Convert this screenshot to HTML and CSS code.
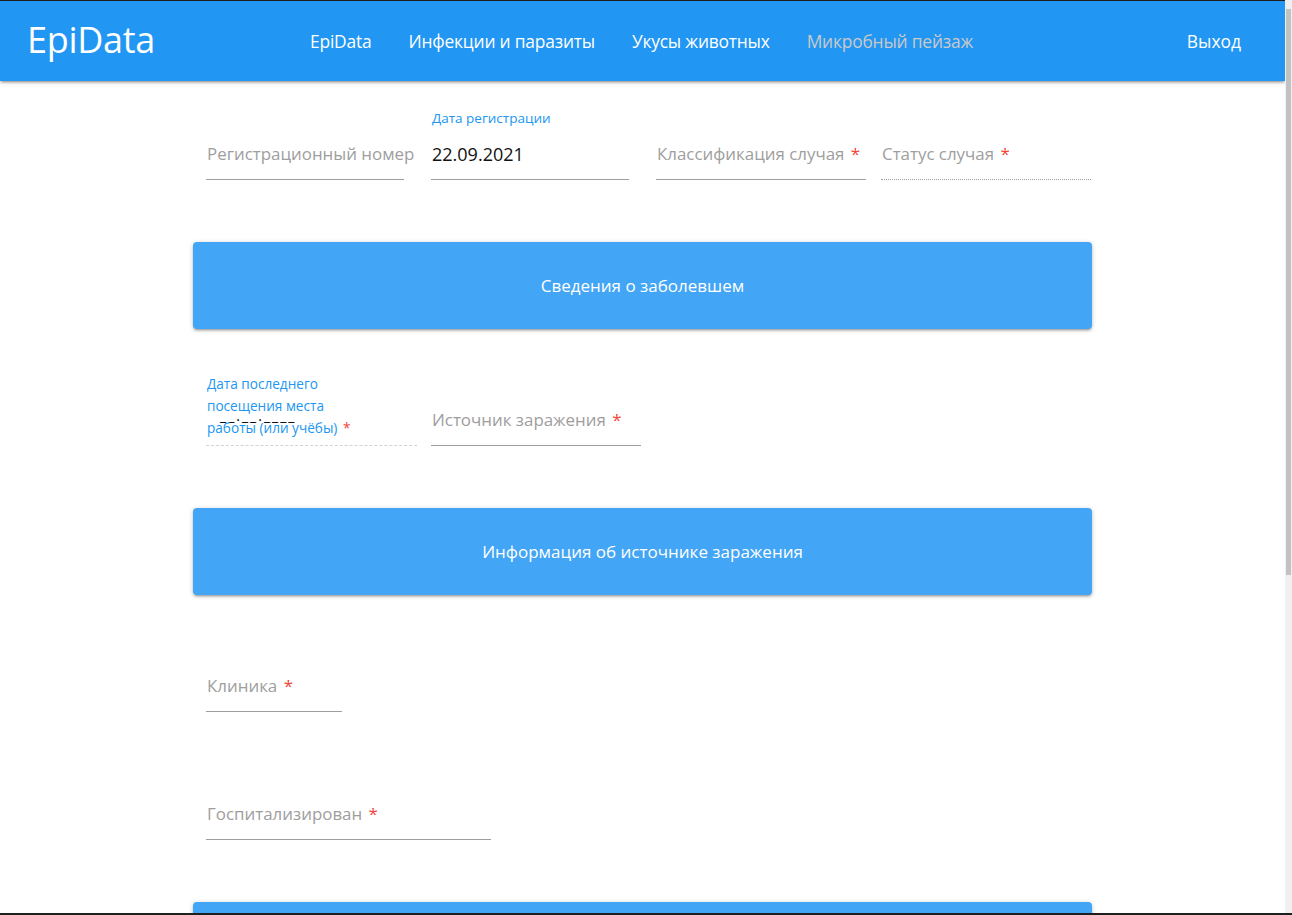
FILE: index.html
```html
<!DOCTYPE html>
<html lang="ru">
<head>
  <meta charset="UTF-8" />
  <title>EpiData</title>
  <link rel="stylesheet" href="styles.css">
</head>
<body>
  <nav id="topbar">
    <a href="#" class="brand">EpiData</a>
    <ul class="menu">
      <li><a href="#">EpiData</a></li>
      <li><a href="#">Инфекции и паразиты</a></li>
      <li><a href="#">Укусы животных</a></li>
      <li><a href="#" class="muted">Микробный пейзаж</a></li>
    </ul>
    <a href="#" class="logout">Выход</a>
  </nav>

  <main id="card-form">
    <div class="row row-first">
      <div class="field w198">
        <div class="input"><span class="ph">Регистрационный номер</span></div>
      </div>
      <div class="field w198">
        <label class="float">Дата регистрации</label>
        <div class="input"><span class="value">22.09.2021</span></div>
      </div>
      <div class="field w210 gap15">
        <div class="input"><span class="ph">Классификация случая <i class="req">*</i></span></div>
      </div>
      <div class="field w210">
        <div class="input dotted"><span class="ph">Статус случая <i class="req">*</i></span></div>
      </div>
    </div>

    <div class="section-head">Сведения о заболевшем</div>

    <div class="row">
      <div class="field w211 gap14">
        <div class="input dashed">
          <span class="mask">__.__.____</span>
          <label class="float-multi">Дата последнего посещения места работы (или учёбы) <i class="req">*</i></label>
        </div>
      </div>
      <div class="field w210">
        <div class="input"><span class="ph">Источник заражения <i class="req">*</i></span></div>
      </div>
    </div>

    <div class="section-head">Информация об источнике заражения</div>

    <div class="row row-tight">
      <div class="field w136">
        <div class="input"><span class="ph">Клиника <i class="req">*</i></span></div>
      </div>
    </div>

    <div class="row">
      <div class="field w285">
        <div class="input"><span class="ph">Госпитализирован <i class="req">*</i></span></div>
      </div>
    </div>

    <div class="section-head">Сведения о госпитализации</div>
  </main>

  <div class="scrollbar"><div class="thumb"></div></div>
  <div class="frame-bottom"></div>
</body>
</html>
```

FILE: styles.css
```css
html, body {
  margin: 0;
  padding: 0;
  font-family: "Open Sans", "Noto Sans", sans-serif;
  background: #fff;
  color: #000;
}

html::-webkit-scrollbar {
  display: none;
}

body {
  border-top: 1px solid #1e1e1e;
  margin-right: 7px;
}

/* window chrome: scrollbar + bottom edge */
.scrollbar {
  position: fixed;
  top: 0;
  right: 0;
  width: 7px;
  height: 100vh;
  background: #f0f0f0;
  z-index: 20;
}

.scrollbar .thumb {
  position: absolute;
  top: 9px;
  left: 1px;
  width: 5px;
  height: 566px;
  background: #c2c2c2;
}

.frame-bottom {
  position: fixed;
  left: 0;
  right: 0;
  bottom: 0;
  height: 2px;
  background: #1e1e1e;
  z-index: 21;
}

#topbar {
  display: flex;
  align-items: center;
  height: 80px;
  background: #2196f3;
  box-shadow: 0 2px 2px 0 rgba(0,0,0,0.14), 0 3px 1px -2px rgba(0,0,0,0.12), 0 1px 5px 0 rgba(0,0,0,0.2);
  padding: 0 44px 0 27px;
  position: relative;
  z-index: 5;
}

#topbar a {
  color: #fff;
  text-decoration: none;
}

.brand {
  font-size: 36px;
  letter-spacing: -0.3px;
  width: 283px;
  flex-shrink: 0;
  line-height: 1;
  padding-bottom: 2px;
}

.menu {
  display: flex;
  list-style: none;
  margin: 0;
  padding: 0;
  gap: 37px;
  flex: 1;
}

.menu a {
  font-size: 17.4px;
  letter-spacing: -0.2px;
}

#topbar a.muted {
  color: #c9c9c9;
}

.logout {
  font-size: 17.4px;
}

#card-form {
  width: 899px;
  margin: 0 auto;
  padding-bottom: 40px;
}

.row {
  display: flex;
  padding: 0 13px;
  margin-bottom: 62px;
}

.row-first {
  margin-top: 50px;
}

.row-tight {
  margin-bottom: 79px;
}

.field {
  position: relative;
  flex-shrink: 0;
  margin-right: 27px;
}

.w198 { width: 198px; }
.w210 { width: 210px; }
.w211 { width: 211px; }
.w136 { width: 136px; }
.w285 { width: 285px; }
.gap15 { margin-right: 15px; }
.gap14 { margin-right: 14px; }

.input {
  position: relative;
  height: 48px;
  border-bottom: 1px solid #9e9e9e;
  display: flex;
  align-items: center;
  font-size: 16.9px;
  white-space: nowrap;
}

.input.dotted {
  border-bottom: 1px dotted #9e9e9e;
}

.input.dashed {
  border-bottom: 1px dashed #d3d3d3;
}

.ph {
  color: #9e9e9e;
  padding-left: 1px;
  margin-top: -3px;
}

.value {
  color: #111;
  font-size: 18px;
  padding-left: 1px;
  margin-top: -3px;
}

.req {
  font-style: normal;
  color: #f44336;
  margin-left: 2px;
}

.float {
  position: absolute;
  top: -22px;
  left: 1px;
  font-size: 13.5px;
  color: #2196f3;
}

.mask {
  position: absolute;
  left: 14px;
  top: 9px;
  font-size: 14px;
  letter-spacing: 2px;
  color: #000;
}

.float-multi {
  position: absolute;
  left: 1px;
  bottom: 6px;
  width: 150px;
  font-size: 13.6px;
  line-height: 22px;
  color: #2196f3;
  white-space: normal;
}

.section-head {
  height: 87px;
  display: flex;
  align-items: center;
  justify-content: center;
  background: #42a5f5;
  color: #fff;
  font-size: 17px;
  border-radius: 4px;
  box-shadow: 0 2px 2px 0 rgba(0,0,0,0.14), 0 3px 1px -2px rgba(0,0,0,0.12), 0 1px 5px 0 rgba(0,0,0,0.2);
  margin-bottom: 68px;
}
```
